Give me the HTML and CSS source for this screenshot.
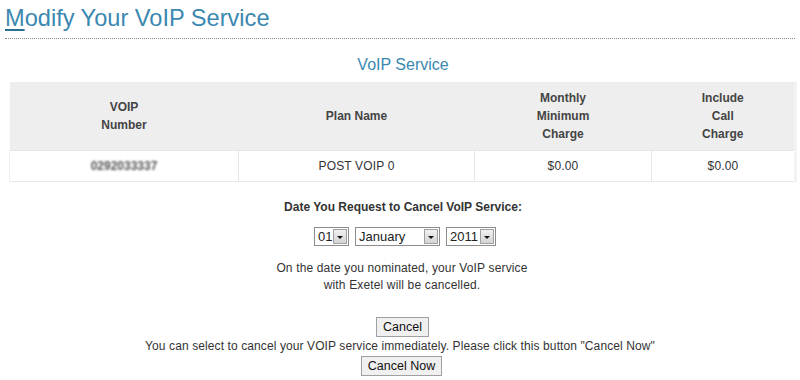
FILE: index.html
```html
<!DOCTYPE html>
<html>
<head>
<meta charset="utf-8">
<link rel="stylesheet" href="styles.css">
</head>
<body>
<div class="page">
  <h1 class="title"><span class="ak">M</span>odify Your VoIP Service</h1>
  <h2 class="caption">VoIP Service</h2>
  <table class="plans">
    <colgroup>
      <col class="c1"><col class="c2"><col class="c3"><col class="c4">
    </colgroup>
    <thead>
      <tr>
        <th>VOIP<br>Number</th>
        <th>Plan Name</th>
        <th>Monthly<br>Minimum<br>Charge</th>
        <th>Include<br>Call<br>Charge</th>
      </tr>
    </thead>
    <tbody>
      <tr>
        <td><span class="blur">0292033337</span></td>
        <td>POST VOIP 0</td>
        <td>$0.00</td>
        <td>$0.00</td>
      </tr>
    </tbody>
  </table>
  <div class="form">
    <div class="label">Date You Request to Cancel VoIP Service:</div>
    <div class="selects">
      <div class="sel s-day"><span class="val">01</span><span class="arr"></span></div>
      <div class="sel s-month"><span class="val">January</span><span class="arr"></span></div>
      <div class="sel s-year"><span class="val">2011</span><span class="arr"></span></div>
    </div>
    <p class="note">On the date you nominated, your VoIP service<br>with Exetel will be cancelled.</p>
    <button class="btn btn-cancel">Cancel</button>
    <div class="now-text">You can select to cancel your VOIP service immediately. Please click this button "Cancel Now"</div>
    <button class="btn">Cancel Now</button>
  </div>
</div>
</body>
</html>
```
FILE: styles.css
```css
html, body { margin: 0; padding: 0; background: #fff; }
body { font-family: "Liberation Sans", Arial, sans-serif; color: #333; font-size: 12px; }
.page { padding: 0 5px; }
.title {
  margin: 0; padding: 5px 0 6px 0;
  font-size: 23.6px; font-weight: normal; color: #3b88b1;
  line-height: 27px;
  border-bottom: 1px dotted #8a8a8a;
}
.ak { text-decoration: underline; text-decoration-color: #2a6f94; text-underline-offset: 3px; }
.caption {
  margin: 16px 0 0 0; text-align: center;
  font-size: 16px; font-weight: normal; color: #3b88b1; line-height: 20px;
  padding-left: 6px;
}
.plans {
  margin: 7px 0 0 4px; width: 786px;
  border-collapse: collapse; table-layout: fixed;
  border-right: 3px solid #f3f3f3; border-bottom: 1px solid #e8e8e8;
}
.c1 { width: 229px; } .c2 { width: 236px; } .c3 { width: 177px; } .c4 { width: 144px; }
.plans th {
  background: #eeeeee; color: #444; font-weight: bold; font-size: 12px;
  line-height: 18px; height: 68px; padding: 0; text-align: center; vertical-align: middle;
}
.plans td {
  height: 30px; padding: 0; text-align: center; color: #333; font-size: 12px;
  border-left: 1px solid #e6e6e6; border-top: 1px solid #e6e6e6;
  letter-spacing: 0.15px;
}
.plans td:first-child { border-left: 1px solid #f0f0f0; }
.blur { color: #555; font-weight: bold; filter: blur(0.9px); letter-spacing: 0; }
.form { text-align: center; }
.label { margin-top: 17px; font-weight: bold; color: #333; line-height: 16px; padding-left: 6px; }
.selects { display: flex; justify-content: center; gap: 6px; margin-top: 12px; margin-left: 10px; }
.sel {
  display: flex; align-items: center; height: 17px;
  border: 1px solid #8c8c8c; background: #fff; box-sizing: content-box;
  font-size: 13px; color: #222;
}
.sel .val { flex: 1; text-align: left; padding-left: 3px; line-height: 17px; }
.s-day { width: 33px; } .s-month { width: 83px; } .s-year { width: 48px; }
.arr {
  width: 12px; height: 13px; margin: 0 1px; position: relative;
  background: linear-gradient(#f0f0f0, #d4d4d4); border: 1px solid #a0a0a0;
}
.arr::after {
  content: ""; position: absolute; left: 3px; top: 6px;
  border-left: 3px solid transparent; border-right: 3px solid transparent; border-top: 3px solid #111;
}
.note { margin: 14px 0 0 0; line-height: 17px; color: #333; letter-spacing: 0.15px; padding-left: 4px; }
.btn {
  font-family: "Liberation Sans", Arial, sans-serif; font-size: 12.5px; color: #111;
  background: #f0f0f0; border: 1px solid #a0a0a0; padding: 0 6px; height: 20px; line-height: 18px;
  border-radius: 0;
}
.btn-cancel { margin-top: 23px; margin-left: 5px; }
.now-text { line-height: 18px; margin: 0 0 1px 0; letter-spacing: 0.1px; }
.form > .btn:last-child { margin-left: 3px; }
```
